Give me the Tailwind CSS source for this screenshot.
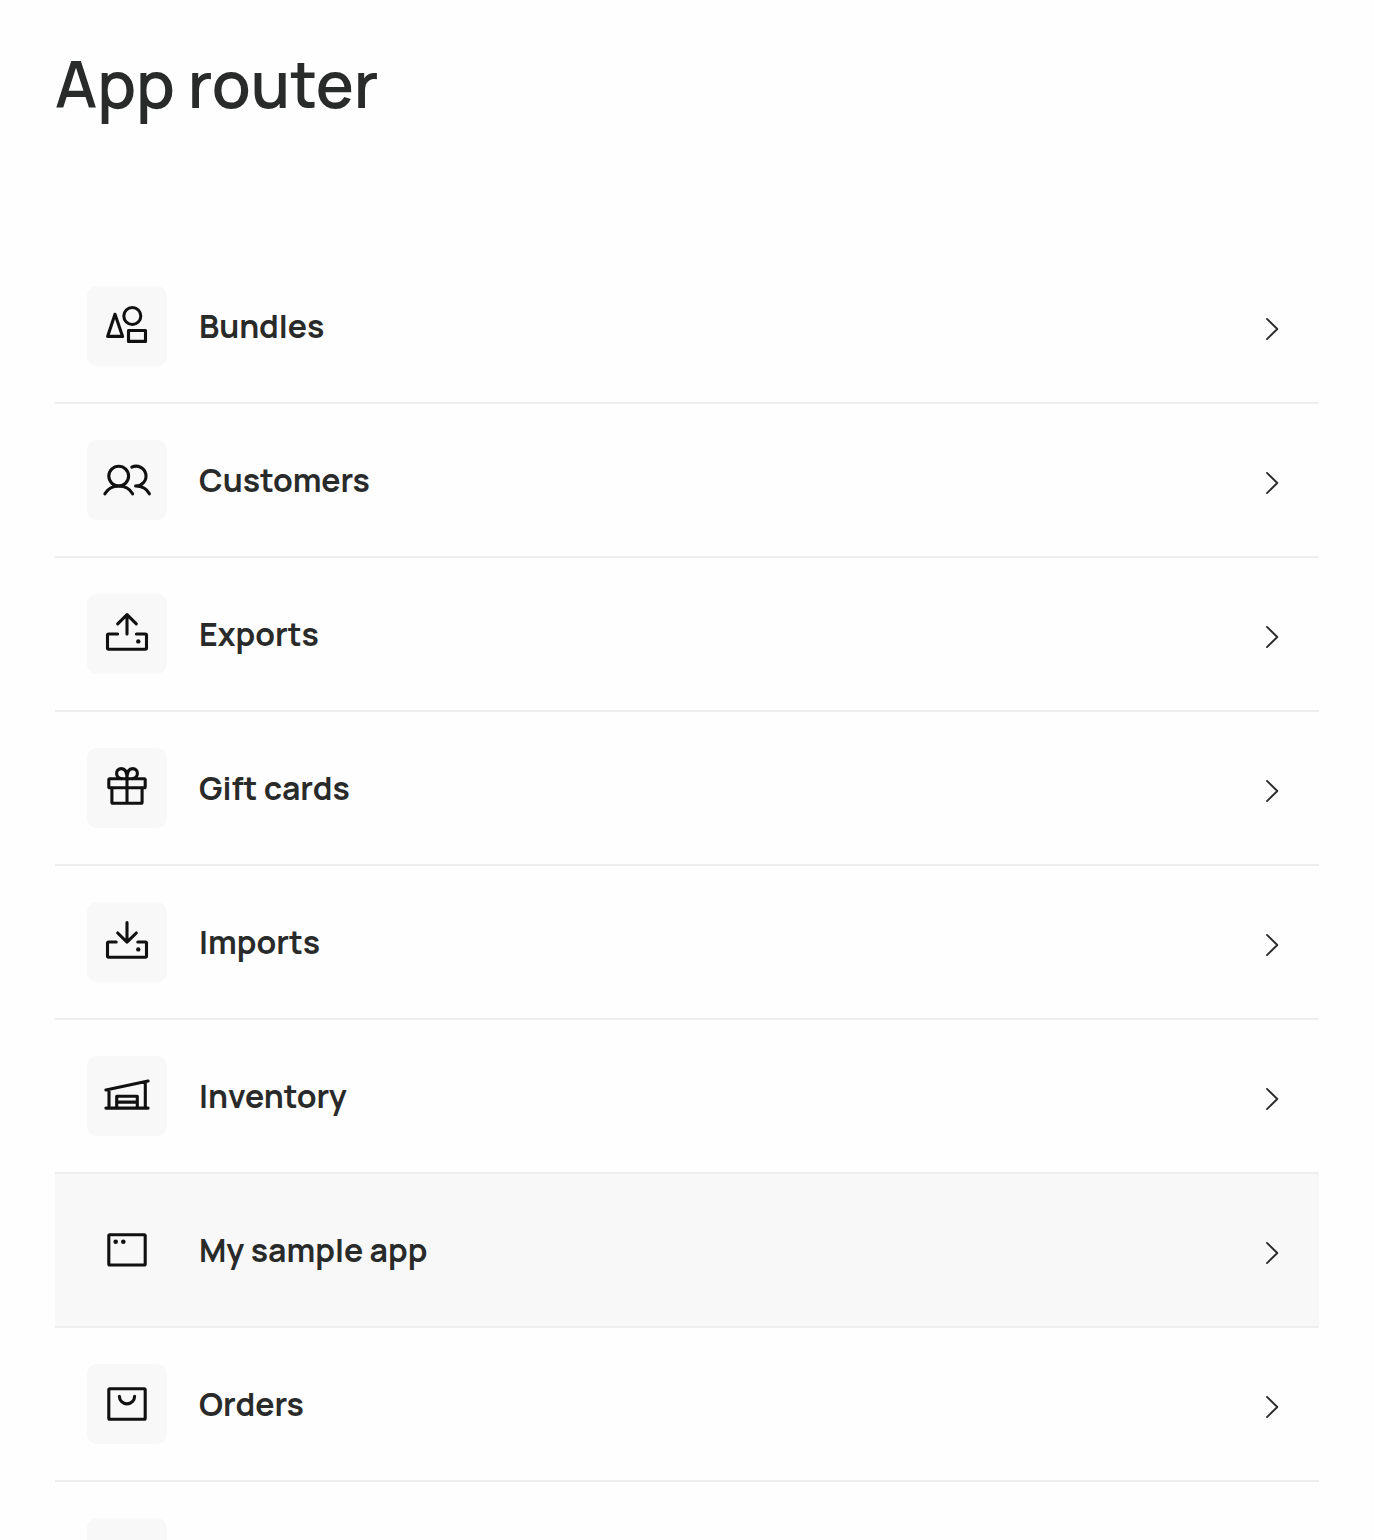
<!DOCTYPE html>
<html lang="en">
<head>
<meta charset="utf-8">
<title>App router</title>
<script src="https://cdn.jsdelivr.net/npm/@tailwindcss/browser@4"></script>
</head>
<body class="h-[1540px] overflow-hidden bg-[#fefefe] font-['Manrope','Inter',sans-serif] text-[#292b2a]">
<svg class="hidden">
  <symbol id="chevron" viewBox="0 0 24 24"><path d="M7 1.9 17.3 12 7 22.1" fill="none" stroke="#292b2a" stroke-width="1.9" stroke-linecap="round" stroke-linejoin="round"/></symbol>
</svg>
<main class="h-[1540px] overflow-hidden px-[55px] pt-[45px]">
  <h1 class="h-[205px] text-[64px] leading-[78px] font-semibold whitespace-nowrap">App router</h1>
  <ul class="text-[32px] leading-[44px] font-bold whitespace-nowrap">
    <li class="flex h-[154px] items-center gap-8 border-b-2 border-[#eeeeee] px-8">
      <svg class="size-20 rounded-[10px] bg-[#f8f8f8]" viewBox="0 0 80 80" fill="none" stroke="#111" stroke-width="3.1" stroke-linecap="round" stroke-linejoin="round"><path d="M28 28.3 20.6 50.4H35.6Z"/><circle cx="45.3" cy="30" r="8.5"/><path d="M41.5 44.5H58.5V55.4H41.5Z"/></svg>
      <span class="flex-1">Bundles</span>
      <svg class="relative top-[3px] mr-[3px] size-6"><use href="#chevron"/></svg>
    </li>
    <li class="flex h-[154px] items-center gap-8 border-b-2 border-[#eeeeee] px-8">
      <svg class="size-20 rounded-[10px] bg-[#f8f8f8]" viewBox="0 0 80 80" fill="none" stroke="#111" stroke-width="3.1" stroke-linecap="round" stroke-linejoin="round"><circle cx="31.7" cy="36.1" r="9.9"/><path d="M17.9 53.8C20.6 49 26 46 31.7 46S43 49 45.6 53.8M44.8 27.2A9.9 9.9 0 1 1 48.6 46C54.5 46 60 49 62.4 53.8"/></svg>
      <span class="flex-1">Customers</span>
      <svg class="relative top-[3px] mr-[3px] size-6"><use href="#chevron"/></svg>
    </li>
    <li class="flex h-[154px] items-center gap-8 border-b-2 border-[#eeeeee] px-8">
      <svg class="size-20 rounded-[10px] bg-[#f8f8f8]" viewBox="0 0 80 80" fill="none" stroke="#111" stroke-width="3.1" stroke-linecap="round" stroke-linejoin="round"><path d="M40 40V20.8M30.7 29.8 40 20.6l9.3 9.2M30.6 40H21.7q-1.2 0-1.2 1.2V54q0 1.2 1.2 1.2H58.3q1.2 0 1.2-1.2V41.2q0-1.2-1.2-1.2H49.4"/><circle cx="51.3" cy="47.4" r="2.2" fill="#111" stroke="none"/></svg>
      <span class="flex-1">Exports</span>
      <svg class="relative top-[3px] mr-[3px] size-6"><use href="#chevron"/></svg>
    </li>
    <li class="flex h-[154px] items-center gap-8 border-b-2 border-[#eeeeee] px-8">
      <svg class="size-20 rounded-[10px] bg-[#f8f8f8]" viewBox="0 0 80 80" fill="none" stroke="#111" stroke-width="3.1" stroke-linecap="round" stroke-linejoin="round"><rect x="21.8" y="30.8" width="36.4" height="9" rx="1"/><path d="M24.9 40V54.2q0 1 1 1H54.1q1 0 1-1V40M40 30.8V55.2M40 30.5C40 24.5 38 20.6 34.4 20.6 31.3 20.6 29.4 23 29.6 25.7 29.8 28.5 31.8 30.5 34.5 30.6M40 30.5C40 24.5 42 20.6 45.6 20.6 48.7 20.6 50.6 23 50.4 25.7 50.2 28.5 48.2 30.5 45.5 30.6"/></svg>
      <span class="flex-1">Gift cards</span>
      <svg class="relative top-[3px] mr-[3px] size-6"><use href="#chevron"/></svg>
    </li>
    <li class="flex h-[154px] items-center gap-8 border-b-2 border-[#eeeeee] px-8">
      <svg class="size-20 rounded-[10px] bg-[#f8f8f8]" viewBox="0 0 80 80" fill="none" stroke="#111" stroke-width="3.1" stroke-linecap="round" stroke-linejoin="round"><path d="M40 20.6V40M30.7 31 40 40.2l9.3-9.2M29.2 40H21.7q-1.2 0-1.2 1.2V54q0 1.2 1.2 1.2H58.3q1.2 0 1.2-1.2V41.2q0-1.2-1.2-1.2H50.8"/><circle cx="51.3" cy="47.4" r="2.2" fill="#111" stroke="none"/></svg>
      <span class="flex-1">Imports</span>
      <svg class="relative top-[3px] mr-[3px] size-6"><use href="#chevron"/></svg>
    </li>
    <li class="flex h-[154px] items-center gap-8 border-b-2 border-[#eeeeee] px-8">
      <svg class="size-20 rounded-[10px] bg-[#f8f8f8]" viewBox="0 0 80 80" fill="none" stroke="#111" stroke-width="3.1" stroke-linecap="round" stroke-linejoin="round"><path d="M18.9 34 61.1 25M18.9 52.1H61.1M22 34V52M58.3 26V52M29.7 52V40.2H50.3V52M30 46.1H50"/></svg>
      <span class="flex-1">Inventory</span>
      <svg class="relative top-[3px] mr-[3px] size-6"><use href="#chevron"/></svg>
    </li>
    <li class="flex h-[154px] items-center gap-8 border-b-2 border-[#eeeeee] bg-[#f8f8f8] px-8">
      <svg class="size-20" viewBox="0 0 80 80" fill="none" stroke="#111" stroke-width="3.1" stroke-linecap="round" stroke-linejoin="round"><rect x="21.8" y="24.8" width="36.4" height="30.2" rx="1"/><g fill="#111" stroke="none"><circle cx="28.7" cy="31.8" r="2.3"/><circle cx="36.3" cy="31.8" r="2.3"/></g></svg>
      <span class="flex-1">My sample app</span>
      <svg class="relative top-[3px] mr-[3px] size-6"><use href="#chevron"/></svg>
    </li>
    <li class="flex h-[154px] items-center gap-8 border-b-2 border-[#eeeeee] px-8">
      <svg class="size-20 rounded-[10px] bg-[#f8f8f8]" viewBox="0 0 80 80" fill="none" stroke="#111" stroke-width="3.1" stroke-linecap="round" stroke-linejoin="round"><rect x="21.8" y="24.8" width="36.4" height="30.4" rx="1"/><path d="M32.4 32.3a7.6 7.6 0 0 0 15.2 0"/></svg>
      <span class="flex-1">Orders</span>
      <svg class="relative top-[3px] mr-[3px] size-6"><use href="#chevron"/></svg>
    </li>
    <li class="flex h-[154px] items-center border-b-2 border-[#eeeeee] px-8"><div class="size-20 rounded-[10px] bg-[#f8f8f8]"></div></li>
  </ul>
</main>
</body>
</html>
